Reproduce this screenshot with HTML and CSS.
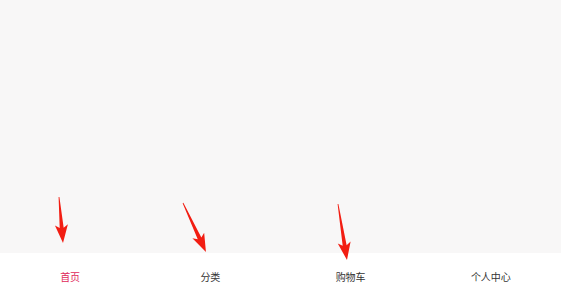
FILE: index.html
```html
<!DOCTYPE html>
<html lang="zh">
<head>
<meta charset="utf-8">
<title>Tab</title>
<link rel="stylesheet" href="styles.css">
</head>
<body>
<div class="app">
  <main class="content"></main>
  <nav class="tabbar">
    <a class="tab active">首页</a>
    <a class="tab">分类</a>
    <a class="tab">购物车</a>
    <a class="tab">个人中心</a>
  </nav>
  <svg class="arrows" width="561" height="299" viewBox="0 0 561 299">
    <g fill="#f21d12">
      <polygon transform="translate(59,197) rotate(-4.97)" points="-0.4,0 0.4,0 2,31 6.5,28 0,46.2 -6.5,28 -2,31"/>
      <polygon transform="translate(183,203) rotate(-25.1)" points="-0.4,0 0.4,0 2,39 6.5,36 0,54.1 -6.5,36 -2,39"/>
      <polygon transform="translate(338,204) rotate(-9.13)" points="-0.4,0 0.4,0 2,42 6.5,39 0,56.7 -6.5,39 -2,42"/>
    </g>
  </svg>
</div>
</body>
</html>
```
FILE: styles.css
```css
html, body {
  margin: 0;
  padding: 0;
  height: 100%;
}
body {
  font-family: "Noto Sans CJK SC", "Noto Sans", sans-serif;
  background: #f8f7f7;
}
.app {
  position: relative;
  height: 100vh;
  display: flex;
  flex-direction: column;
}
.content {
  flex: 1;
  background: #f8f7f7;
}
.tabbar {
  height: 46px;
  background: #fff;
  display: grid;
  grid-template-columns: repeat(4, 1fr);
  align-items: center;
}
.tab {
  text-align: center;
  font-size: 10px;
  color: #333;
  text-decoration: none;
}
.tab.active {
  color: #e0285a;
}
.arrows {
  position: absolute;
  top: 0;
  left: 0;
  pointer-events: none;
}
```
